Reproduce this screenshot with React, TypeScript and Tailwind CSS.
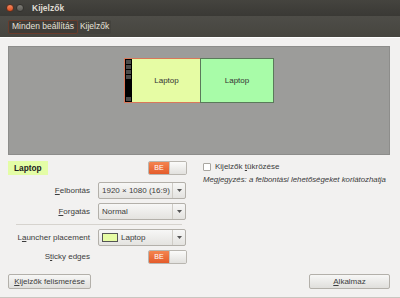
import React from "react";

const font = { fontFamily: '"Liberation Sans", "DejaVu Sans", sans-serif' };

function Toggle() {
  return (
    <div className="flex h-[14px] w-[39px] overflow-hidden rounded-[2px] border border-[#b9b6b0]">
      <div className="flex w-[20px] items-center justify-center bg-gradient-to-b from-[#f4844f] to-[#e45b2a] text-[7px] text-white">
        BE
      </div>
      <div className="flex-1 bg-gradient-to-b from-[#fbfbfa] to-[#e2e1de] border-l border-[#c9c6c0]" />
    </div>
  );
}

function Combo({ children }: { children: React.ReactNode }) {
  return (
    <div className="flex h-[17px] w-[88px] items-center rounded-[2px] border border-[#b3b0aa] bg-gradient-to-b from-[#f7f7f6] to-[#e4e3e0] pl-[3px] text-[8px] text-[#3c3c3c]">
      <div className="flex flex-1 items-center gap-[3px] whitespace-nowrap">{children}</div>
      <div className="flex h-full w-[13px] items-center justify-center border-l border-[#cfccc6]">
        <svg width="5" height="3" viewBox="0 0 5 3">
          <path d="M0 0h5L2.5 3z" fill="#555" />
        </svg>
      </div>
    </div>
  );
}

function Row({ label, children }: { label: React.ReactNode; children: React.ReactNode }) {
  return (
    <div className="flex items-center">
      <div className="w-[82px] text-right text-[8px] text-[#3c3c3c]">{label}</div>
      <div className="ml-[8px]">{children}</div>
    </div>
  );
}

export default function App() {
  return (
    <div className="flex h-[298px] w-[400px] flex-col bg-[#f2f1f0] border-b border-[#c9c6c0]" style={font}>
      <div className="flex h-[16px] items-center bg-gradient-to-b from-[#45443f] to-[#3a3935] px-[6px]">
        <div className="flex gap-[2px]">
          <div className="h-[8px] w-[8px] rounded-full bg-gradient-to-b from-[#f58a60] to-[#df4a16] border border-[#5a3020]" />
          <div className="h-[8px] w-[8px] rounded-full bg-gradient-to-b from-[#807e78] to-[#5b5a55] border border-[#33322e]" />
        </div>
        <div className="ml-[8px] text-[8.5px] font-bold text-[#dfdbd2]">Kijelzők</div>
      </div>
      <div className="flex h-[22px] items-center bg-gradient-to-b from-[#4e4d48] to-[#46453f] px-[8px] text-[8.5px] text-[#e6e2da] border-b border-[#ffffff]">
        <div className="flex h-[14px] items-center rounded-[2px] border border-[#6a3c2c] bg-[#3f3c37] px-[3px]">
          Minden beállítás
        </div>
        <div className="flex h-[14px] items-center rounded-[2px] bg-[#43423d] px-[2px]">Kijelzők</div>
      </div>
      <div className="flex flex-1 flex-col px-[8px] pt-[8px]">
        <div className="mr-[2px] flex h-[109px] justify-center border border-[#8d8d8b] bg-[#9c9c9a] pt-[11px]">
          <div className="flex h-[45px]">
            <div className="flex w-[78px] border-[1.5px] border-[#d9785a] bg-[#e6fca4]">
              <div className="flex w-[7px] flex-col gap-[1px] bg-black p-[1px]">
                <div className="h-[4px] bg-[#4a4a4a]" />
                <div className="h-[4px] bg-[#4a4a4a]" />
                <div className="h-[4px] bg-[#4a4a4a]" />
                <div className="h-[4px] bg-[#4a4a4a]" />
                <div className="flex-1" />
                <div className="h-[4px] bg-[#4a4a4a]" />
              </div>
              <div className="flex flex-1 items-center justify-center text-[8px] text-[#333]">Laptop</div>
            </div>
            <div className="-ml-[2px] flex w-[74px] items-center justify-center border border-[#5a7a5a] bg-[#a8fca8] text-[8px] text-[#333]">
              Laptop
            </div>
          </div>
        </div>
        <div className="mt-[6px] flex flex-1">
          <div className="flex w-[182px] flex-col">
            <div className="flex h-[14px] items-center justify-between pr-[3px]">
              <div className="flex h-[14px] items-center bg-[#e4fda6] px-[6px] text-[8.3px] font-bold text-[#222]">
                Laptop
              </div>
              <Toggle />
            </div>
            <div className="mt-[7px] flex flex-col gap-[4px]">
              <Row label={<><u>F</u>elbontás</>}>
                <Combo>1920 × 1080 (16:9)</Combo>
              </Row>
              <Row label={<><u>F</u>orgatás</>}>
                <Combo>Normal</Combo>
              </Row>
            </div>
            <div className="mx-[8px] mt-[4px] h-px bg-[#d6d3ce]" />
            <div className="mt-[4px] flex flex-col gap-[4px]">
              <Row label={<>L<u>a</u>uncher placement</>}>
                <Combo>
                  <span className="h-[9px] w-[16px] border border-[#555] bg-[#e6fca4]" />
                  Laptop
                </Combo>
              </Row>
              <div className="flex items-center">
                <div className="w-[82px] text-right text-[8px] text-[#3c3c3c]">
                  S<u>t</u>icky edges
                </div>
                <div className="ml-[58px]">
                  <Toggle />
                </div>
              </div>
            </div>
          </div>
          <div className="ml-[13px] flex flex-1 flex-col">
            <div className="flex items-center gap-[4px] text-[8px] text-[#3c3c3c]">
              <div className="h-[8px] w-[8px] rounded-[1px] border border-[#a9a6a0] bg-white" />
              <span>
                Kijelzők <u>t</u>ükrözése
              </span>
            </div>
            <div className="mt-[1px] whitespace-nowrap text-[7.8px] italic text-[#3c3c3c]">
              Megjegyzés: a felbontási lehetőségeket korlátozhatja
            </div>
          </div>
        </div>
        <div className="mb-[8px] flex justify-between pr-[2px]">
          <div className="flex h-[15px] w-[83px] items-center justify-center rounded-[2px] border border-[#b3b0aa] bg-gradient-to-b from-[#f7f7f6] to-[#e0dfdc] text-[8px] text-[#3c3c3c]">
            <u>K</u>ijelzők felismerése
          </div>
          <div className="flex h-[15px] w-[81px] items-center justify-center rounded-[2px] border border-[#b3b0aa] bg-gradient-to-b from-[#f7f7f6] to-[#e0dfdc] text-[8px] text-[#3c3c3c]">
            <u>A</u>lkalmaz
          </div>
        </div>
      </div>
    </div>
  );
}
